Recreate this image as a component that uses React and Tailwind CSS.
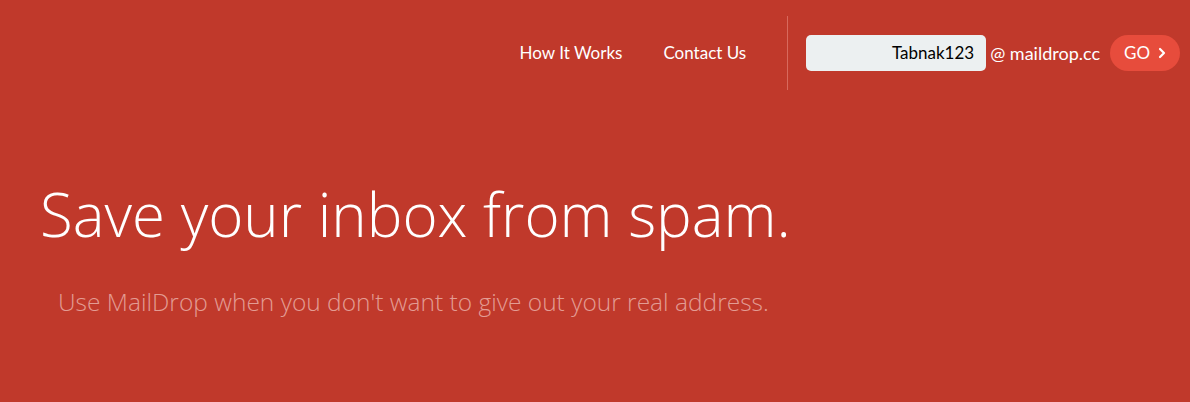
import React from "react";

export default function App() {
  return (
    <div className="w-[1190px] h-[402px] bg-[#c0392b] overflow-hidden" style={{ fontFamily: "Lato, 'Open Sans', sans-serif" }}>
      <header className="flex justify-end items-center h-[106px] pt-[16px] pb-[16px] pr-[10px]">
        <nav className="flex items-center gap-[41px] text-white text-[17px] mr-[41px]">
          <a className="cursor-pointer">How It Works</a>
          <a className="cursor-pointer">Contact Us</a>
        </nav>
        <div className="w-px self-stretch bg-[#d8695d] mr-[18px]"></div>
        <div className="flex items-center">
          <div className="w-[180px] h-[36px] rounded-[5px] bg-[#ecf0f1] flex items-center justify-end pr-[12px] text-[17px] text-black">Tabnak123</div>
          <span className="text-white text-[18px] ml-[4px]">@ maildrop.cc</span>
          <button className="ml-[10px] h-[36px] w-[70px] rounded-full bg-[#e74c3c] text-white text-[17px] flex items-center justify-center gap-[8px]">
            GO
            <svg width="8" height="12" viewBox="0 0 8 12"><path d="M2 2l4 4-4 4" stroke="white" strokeWidth="2.2" fill="none" strokeLinecap="round" strokeLinejoin="round" /></svg>
          </button>
        </div>
      </header>
      <main className="pl-[40px] pt-[78px]">
        <h1 className="text-white text-[60px] font-light leading-none" style={{ fontFamily: "'Open Sans', sans-serif" }}>Save your inbox from spam.</h1>
        <p className="mt-[40px] ml-[18px] text-[24.5px] font-light text-[#e39c93]" style={{ fontFamily: "'Open Sans', sans-serif" }}>Use MailDrop when you don't want to give out your real address.</p>
      </main>
    </div>
  );
}
